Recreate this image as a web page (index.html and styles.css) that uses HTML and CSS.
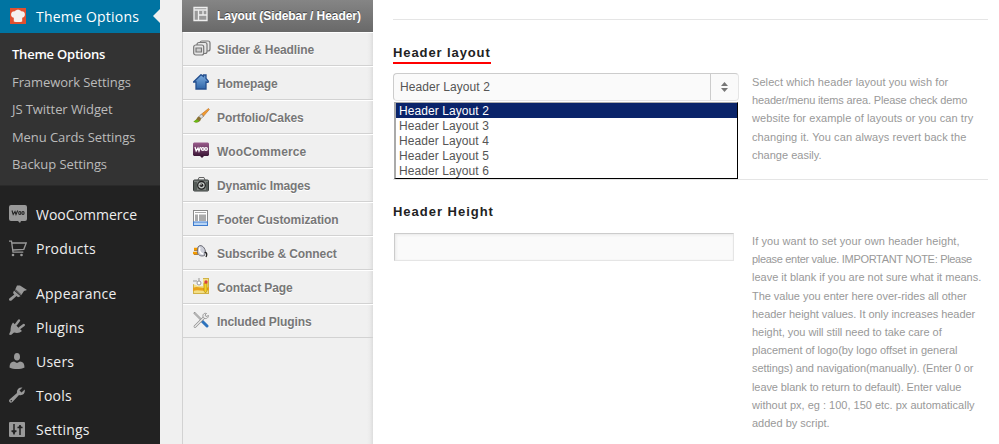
FILE: index.html
```html
<!DOCTYPE html>
<html lang="en">
<head>
<meta charset="utf-8">
<title>Theme Options</title>
<link rel="stylesheet" href="styles.css">
</head>
<body>
<div class="app">
  <aside class="admin">
    <a class="row current"><svg width="16" height="16" viewBox="0 0 16 16"><rect width="16" height="16" fill="#e0502f"/><path d="M3.800 13.500V9.800C1.500 9.500.7 7.500 1.200 5.500 1.800 3.500 3.500 2.800 5 3.300 5.800 1.300 10.200 1.300 11 3.300c1.500-.5 3.400.2 3.800 2.200.5 2-.5 4-2.600 4.300v3.700c-2 .8-6.400.8-8.400 0z" fill="#f5f1ee"/></svg><span>Theme Options</span></a>
    <div class="submenu">
      <a class="on">Theme Options</a><a>Framework Settings</a><a>JS Twitter Widget</a><a>Menu Cards Settings</a><a>Backup Settings</a>
    </div>
    <div class="group first">
      <a class="row woo"><svg width="18" height="18" viewBox="0 0 18 18"><path d="M2 0h14q2 0 2 2v12q0 2-2 2h-4l-1 2-2-2H2q-2 0-2-2V2q0-2 2-2z" fill="#999"/><g fill="none" stroke="#222" stroke-width="1.100"><path d="M3 5.500l1.200 4L6 6.500l1 3 1.700-4"/><ellipse cx="10.800" cy="8" rx="1.100" ry="1.500"/><ellipse cx="14" cy="8" rx="1.100" ry="1.500"/></g></svg><span>WooCommerce</span></a>
      <a class="row"><svg width="18" height="17" viewBox="0 0 18 17"><path d="M0 1.200h2.500l1.500 11h10.300M3 3h14.200L14.800 9.300 4 10" fill="none" stroke="#999" stroke-width="1.300"/><circle cx="4" cy="15" r="1.300" fill="#999"/><circle cx="12.500" cy="15" r="1.300" fill="#999"/></svg><span>Products</span></a>
    </div>
    <div class="group">
      <a class="row"><svg width="18" height="16" viewBox="0 0 18 16" fill="#999"><path d="M8 .5h3L18 5l-3 1-3 4.500L6 5z"/><path d="M5 5.500l6.500 5.700-2.500 1L7.500 11 2.500 15.500C1 16.500-.7 15 .3 13.500L5.300 9.500 4 8z"/><path d="M6.500 4.500l6 5.500" stroke="#222" stroke-width=".6"/></svg><span>Appearance</span></a>
      <a class="row"><svg width="16" height="16" viewBox="0 0 16 16" fill="#999"><path d="M4 3.500l9 8.500c-2 2-5 2.300-8 1.500L2 16l-2-.5L1.500 12C1.500 9 2 6 4 3.500z"/><path d="M7 5.500L10 1.500M10.800 9L14.800 6" stroke="#999" stroke-width="2.300" stroke-linecap="round"/></svg><span>Plugins</span></a>
      <a class="row"><svg width="16" height="16" viewBox="0 0 16 16" fill="#999"><ellipse cx="8" cy="3.800" rx="3" ry="3.800"/><path d="M.5 14.500c0-4 1.500-6 4.500-6l3 1.500 3-1.500c3 0 4.500 2 4.500 6-4 2-11 2-15 0z"/></svg><span>Users</span></a>
      <a class="row"><svg width="16" height="16" viewBox="0 0 16 16" fill="#999"><path d="M13.500.5L10.500 3.500 12.500 5.500 15.700 2.500C16.500 6 14 9 10 8L3.500 15C1 17-1.200 14 .8 12.200L8 6C7.300 2.500 10 0 13.500.5z"/><circle cx="2.300" cy="13.700" r=".8" fill="#222"/></svg><span>Tools</span></a>
      <a class="row"><svg width="16" height="15" viewBox="0 0 16 15"><rect width="16" height="15" rx="1" fill="#999"/><path d="M5 2v10.500M2.500 9h5M11 3v10M8.500 5.500h5" stroke="#222" stroke-width="1.500"/><path d="M2.500 9h5L5 12zM8.500 6h5L11 3z" fill="#222"/></svg><span>Settings</span></a>
    </div>
  </aside>
  <nav class="tabs">
    <a class="tab active"><svg width="16" height="16" viewBox="0 0 16 16"><path d="M1 1.500h13v13H1zM1 4h13M5.500 4v10.500M5.500 9H14M10 5v4" fill="#999" stroke="#eee" stroke-width="1.300"/></svg><span>Layout (Sidebar / Header)</span></a>
    <a class="tab"><svg width="18" height="16" viewBox="0 0 18 16" fill="#e7e7e7" stroke="#777" stroke-width="1.200"><rect x="7" y="1" width="10" height="10" rx="2"/><rect x="4" y="2.500" width="10" height="11" rx="2"/><rect x=".7" y="5" width="10" height="10" rx="2"/><path d="M3 8h5.500v4H3z" fill="#ccc"/></svg><span>Slider &amp; Headline</span></a>
    <a class="tab"><svg width="16" height="16" viewBox="0 0 16 16"><defs><linearGradient id="house" x2="0" y2="1"><stop stop-color="#7daddf"/><stop offset="1" stop-color="#2f65a8"/></linearGradient></defs><path d="M3 8v7h10V8l2 .3.500-1L13 4.500V1h-2.500v1.500L8 .7.500 8z" fill="url(#house)" stroke="#244f8e" stroke-width="1.300"/></svg><span>Homepage</span></a>
    <a class="tab"><svg width="17" height="16" viewBox="0 0 17 16"><path d="M15.500.5L8 6.500l2 2.300L16.300 1.500z" fill="#f29b2e" stroke="#b56a24" stroke-width=".6"/><path d="M8.500 6L6 8.500l2 2.200 2.500-2.500z" fill="#ddd" stroke="#777" stroke-width=".7"/><path d="M6 8.500C3.500 9 4 12.500.5 13.500c3 2 7.500.5 7.500-3z" fill="#8b7032"/><path d="M3.500 11.500L.5 13.500c2 1.500 4.500 1 6-.5z" fill="#69b816"/></svg><span>Portfolio/Cakes</span></a>
    <a class="tab woo"><svg width="16" height="16" viewBox="0 0 16 16"><defs><linearGradient id="plum" x2="0" y2="1"><stop stop-color="#9b5c8d"/><stop offset="1" stop-color="#2d0c29"/></linearGradient></defs><path d="M1 .5h14l1 1V13l-1 1H11l-2 2-2-2H1l-1-1V1.500z" fill="url(#plum)"/><g stroke="#fff" fill="none" stroke-width="1.300"><path d="M2 5l1.200 4L5 6l1 3 1.500-4"/><circle cx="9.800" cy="7" r="1.400"/><circle cx="13" cy="7" r="1.400"/></g></svg><span>WooCommerce</span></a>
    <a class="tab"><svg width="16" height="15" viewBox="0 0 16 15"><path d="M5 3l1-2.500h5L12 3" fill="#eee" stroke="#666"/><rect x=".5" y="3" width="15" height="11" rx="1" fill="#7c827e" stroke="#353a38"/><path d="M1 5h3v8H1zM13 5h2v8h-2z" fill="#555c58"/><circle cx="8.500" cy="8.300" r="3.800" fill="#c4cac6" stroke="#222" stroke-width="1.300"/><circle cx="8.500" cy="8.300" r="1.800" fill="#222"/><circle cx="8" cy="7.700" r=".6" fill="#fff"/></svg><span>Dynamic Images</span></a>
    <a class="tab"><svg width="15" height="16" viewBox="0 0 15 16"><rect x=".5" y=".5" width="14" height="15" fill="#fff" stroke="#8b8b8b"/><path d="M2 2h11v1H2zM2 4.500h3V11H2zM6 4.500h7V11H6z" fill="#aaa"/><rect x=".5" y="12" width="14" height="3.500" fill="#b8d5f5" stroke="#3d7bcf"/></svg><span>Footer Customization</span></a>
    <a class="tab"><svg width="16" height="16" viewBox="0 0 16 16"><path d="M1 5h5M0 9h5" stroke="#f29a00" stroke-width="2.400"/><path d="M1 6.500h4M1 10.500h4" stroke="#9b5900" stroke-width=".7"/><path d="M5 3C7 0 11.500 2 12.500 7.500L11.500 11.500C8 13 3.500 11 4.500 6z" fill="#ccced8" stroke="#6d6d77"/><path d="M7 3.500C5.500 6 7 9 10 10" stroke="#fff" stroke-width="1.500" fill="none"/><path d="M11.500 8.500c2-.5 3 1.500 1.500 4.500" stroke="#222" stroke-width="1.300" fill="none"/></svg><span>Subscribe &amp; Connect</span></a>
    <a class="tab"><svg width="16" height="16" viewBox="0 0 16 16"><rect x=".5" y=".5" width="15" height="15" fill="#f3df86" stroke="#d0b147"/><path d="M0 10c5-3 10 2 16-1v3c-6 2-11-1-16 1z" fill="#e8a21c"/><path d="M0 0h10v8H5L0 6z" fill="#eee"/><path d="M0 3h4M6 0v3" stroke="#999"/><circle cx="6" cy="5" r="2" fill="#fff" stroke="#999"/><path d="M11 5h3v8l-1.500 2L11 13z" fill="#f4cf25" stroke="#aa8510" stroke-width=".6"/><circle cx="13" cy="4" r="1.700" fill="#da3f44"/></svg><span>Contact Page</span></a>
    <a class="tab"><svg width="16" height="16" viewBox="0 0 16 16"><path d="M9 9l5 5" stroke="#2d73bd" stroke-width="3" stroke-linecap="round"/><path d="M1 .5L8.500 8" stroke="#888" stroke-width="2"/><path d="M1.500 1L8 7.500" stroke="#ddd"/><path d="M2 14.500L11.500 5" stroke="#8d8d8d" stroke-width="2.600" stroke-linecap="round"/><path d="M2 14.500L11.500 5" stroke="#e9e9e9" stroke-width="1.400" stroke-linecap="round"/><path d="M13.500 1.500c-3-1-4.500 2-3 4s5 1 5-2L13 4.500 12 3z" fill="#eee" stroke="#888" stroke-width=".8"/></svg><span>Included Plugins</span></a>
  </nav>
  <main class="panel">
    <section class="option layout">
      <h2 class="marked">Header layout</h2>
      <div class="cols">
        <div class="control">
          <div class="select"><span>Header Layout 2</span><i><svg width="7" height="10" viewBox="0 0 7 10" fill="#777"><path d="M0 4l3.500-4L7 4zM0 6h7l-3.500 4z"/></svg></i></div>
          <ul class="options"><li class="chosen">Header Layout 2</li><li>Header Layout 3</li><li>Header Layout 4</li><li>Header Layout 5</li><li>Header Layout 6</li></ul>
        </div>
        <p><span class="wide">Select which header layout you wish for</span> <span class="narrow">header/menu items area. Please check demo</span> <span class="wide">website for example of layouts or you can try</span> <span class="wide">changing it. You can always revert back the</span> <span>change easily.</span></p>
      </div>
    </section>
    <section class="option height">
      <h2>Header Height</h2>
      <div class="cols">
        <div class="control"><input class="field" type="text" aria-label="Header Height"></div>
        <p><span class="wide">If you want to set your own header height,</span> <span class="caps">please enter value. IMPORTANT NOTE: Please</span> <span>leave it blank if you are not sure what it means.</span> <span class="snug">The value you enter here over-rides all other</span> <span class="snug">header height values. It only increases header</span> <span class="snug">height, you will still need to take care of</span> <span class="snug">placement of logo(by logo offset in general</span> <span class="tight">settings) and navigation(manually). (Enter 0 or</span> <span class="tight">leave blank to return to default). Enter value</span> <span>without px, eg : 100, 150 etc. px automatically</span> <span>added by script.</span></p>
      </div>
    </section>
  </main>
</div>
</body>
</html>
```
FILE: styles.css
```css
* { box-sizing: border-box; }
body { margin: 0; overflow: hidden; background: #f0f0f0; font-family: "Liberation Sans", Arial, sans-serif; }
.app { display: flex; height: 444px; overflow: hidden; }

.admin { width: 160px; flex: none; background: #222; color: #eee; font-family: "Open Sans", sans-serif; }
.row { display: flex; align-items: center; height: 34px; padding-left: 9px; font-size: 14px; white-space: nowrap; letter-spacing: .22px; }
.row.woo { letter-spacing: 0; }
.row svg { flex: none; }
.row span { margin-left: auto; width: 124px; }
.current { position: relative; height: 33px; padding-left: 10px; background: #0074a2; color: #fff; }
.current svg { margin-top: -1px; }
.current::after { content: ""; position: absolute; right: 0; top: 9px; border: 7px solid transparent; border-left: 0; border-right-color: #f0f0f0; }
.submenu { height: 153px; padding-top: 8px; background: #333; border-bottom: 1px solid #2a2a2a; }
.submenu a { display: block; height: 27.5px; line-height: 27px; padding-left: 12px; font-size: 13px; color: #bbb; white-space: nowrap; letter-spacing: -.08px; }
.submenu .on { color: #fff; font-weight: 600; letter-spacing: -.22px; }
.group.first { margin: 11px 0 11px; }

.tabs { width: 191px; flex: none; margin-left: 22px; border-left: 1px solid #d2d2d2; background: linear-gradient(to left, #ddd 0, #ebebeb 3px, #f0f0f0 6px); }
.tab { display: flex; align-items: center; height: 34px; padding-left: 10px; border-top: 1px solid #fff; border-bottom: 1px solid #d2d2d2; font-size: 12px; font-weight: bold; color: #777; text-shadow: 0 1px 0 #fff; white-space: nowrap; letter-spacing: -.09px; }
.tab.woo { letter-spacing: .15px; }
.tab svg { flex: none; margin-top: -2px; }
.tab span { margin-left: auto; width: 156px; padding-top: 2px; }
.tab.active { height: 32px; margin-left: -1px; padding-left: 11px; border: 0; background: linear-gradient(#858585, #696969); color: #fff; text-shadow: 0 -1px 0 #444; letter-spacing: -.06px; }
.tab.active svg { margin-top: -4px; }
.tab.active span { padding-top: 0; }

.panel { flex: 1; padding: 19px 11px 0 20px; background: #fff; }
.option { border-top: 1px solid #e5e5e5; }
.option.layout { height: 160px; padding-top: 24px; }
.option.height { padding-top: 23px; }
h2 { width: max-content; margin: 0; height: 20px; line-height: 17px; font-size: 13px; letter-spacing: .98px; color: #222; white-space: nowrap; }
.marked { width: 98px; border-bottom: 2px solid #f00; letter-spacing: .9px; }
.cols { display: flex; gap: 13px; margin-top: 9px; }
.height .cols { margin-top: 10px; }
.control { position: relative; width: 346px; flex: none; }
.select { display: flex; height: 28px; border: 1px solid #ccc; border-right-color: #e5e5e5; border-bottom-color: #e5e5e5; border-radius: 4px; background: #fafafa; color: #555; font-size: 12px; line-height: 26px; letter-spacing: .08px; }
.select span { flex: 1; padding-left: 6px; }
.select i { display: flex; align-items: center; justify-content: center; width: 28px; border-left: 1px solid #ccc; }
.options { position: absolute; top: 29px; left: 1px; width: 344px; height: 77px; margin: 0; padding: 0; list-style: none; background: #fff; border: 1px solid #000; border-left: 2px solid #aaa; border-top-color: #aaa; font-size: 12px; line-height: 17px; color: #555; letter-spacing: .08px; }
.options li { height: 15px; padding-left: 3px; }
.options .chosen { background: #0a246a; color: #fff; }
p { margin: 0; font-size: 11px; line-height: 18.2px; color: #999; white-space: nowrap; }
.height p { margin-top: -1px; }
p span { display: block; }
.wide { letter-spacing: .08px; }
.snug { letter-spacing: -.04px; }
.tight { letter-spacing: -.09px; }
.narrow { letter-spacing: -.15px; }
.caps { letter-spacing: -.31px; }
.field { display: block; width: 340px; height: 28px; margin: 0 0 0 1px; border: 1px solid #ccc; border-right-color: #e5e5e5; border-bottom-color: #e5e5e5; background: #fafafa; box-shadow: inset 1px 1px 3px #e8e8e8; }
```
